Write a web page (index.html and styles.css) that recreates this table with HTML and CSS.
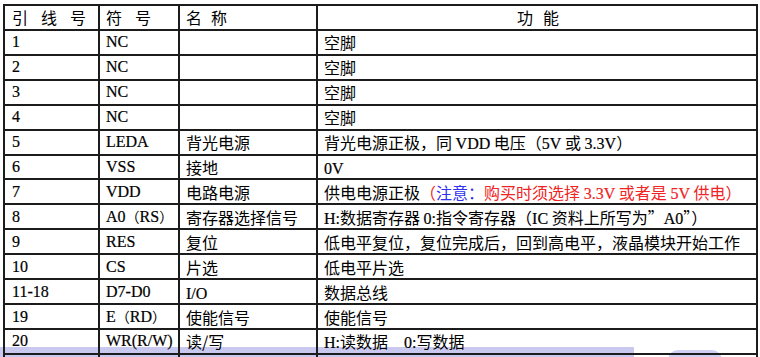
FILE: index.html
```html
<!DOCTYPE html>
<html lang="zh-CN">
<head>
  <meta charset="UTF-8">
  <meta name="viewport" content="width=device-width, initial-scale=1.0">
  <title>引脚功能</title>
  <link rel="stylesheet" href="styles.css">
</head>
<body>
  <div class="sheet">
    <table class="pins">
      <colgroup>
        <col class="c-pin">
        <col class="c-sym">
        <col class="c-name">
        <col class="c-func">
      </colgroup>
      <thead>
        <tr>
          <th class="h-pin">引线号</th>
          <th class="h-sym">符号</th>
          <th class="h-name">名称</th>
          <th class="h-func">功能</th>
        </tr>
      </thead>
      <tbody>
        <tr><td class="pin">1</td><td class="sym">NC</td><td></td><td>空脚</td></tr>
        <tr><td class="pin">2</td><td class="sym">NC</td><td></td><td>空脚</td></tr>
        <tr><td class="pin">3</td><td class="sym">NC</td><td></td><td>空脚</td></tr>
        <tr><td class="pin">4</td><td class="sym">NC</td><td></td><td>空脚</td></tr>
        <tr><td class="pin">5</td><td class="sym">LEDA</td><td>背光电源</td><td>背光电源正极，同 <span class="en">VDD</span> 电压（<span class="en">5V</span> 或 <span class="en">3.3V</span>）</td></tr>
        <tr><td class="pin">6</td><td class="sym">VSS</td><td>接地</td><td><span class="en">0V</span></td></tr>
        <tr><td class="pin">7</td><td class="sym">VDD</td><td>电路电源</td><td>供电电源正极<span class="warn">（</span><span class="note">注意：</span><span class="warn">购买时须选择 <span class="en">3.3V</span> 或者是 <span class="en">5V</span> 供电）</span></td></tr>
        <tr><td class="pin">8</td><td class="sym">A0<span class="cjk">（</span>RS<span class="cjk">）</span></td><td>寄存器选择信号</td><td><span class="en">H:</span>数据寄存器 <span class="en">0:</span>指令寄存器（<span class="en">IC</span> 资料上所写为”<span class="en">A0</span>”）</td></tr>
        <tr><td class="pin">9</td><td class="sym">RES</td><td>复位</td><td>低电平复位，复位完成后，回到高电平，液晶模块开始工作</td></tr>
        <tr><td class="pin">10</td><td class="sym">CS</td><td>片选</td><td>低电平片选</td></tr>
        <tr><td class="pin">11-18</td><td class="sym">D7-D0</td><td><span class="en">I/O</span></td><td>数据总线</td></tr>
        <tr><td class="pin">19</td><td class="sym">E<span class="cjk">（</span>RD<span class="cjk">）</span></td><td>使能信号</td><td>使能信号</td></tr>
        <tr><td class="pin">20</td><td class="sym">WR(R/W)</td><td>读/写</td><td><span class="en">H:</span>读数据　<span class="en">0:</span>写数据</td></tr>
        <tr class="next"><td></td><td></td><td></td><td></td></tr>
      </tbody>
    </table>
    <div class="band"></div>
    <div class="hump"></div>
  </div>
</body>
</html>
```

FILE: styles.css
```css
/* pin table sheet */

html, body {
  margin: 0;
  padding: 0;
  background: #fff;
  overflow: hidden;
}

body {
  font-family: "Noto Sans CJK SC", sans-serif;
  color: #000;
}

.sheet {
  position: relative;
  padding: 4px 0 0 3px;
}

.pins {
  position: relative;
  z-index: 1;
  border-collapse: collapse;
  table-layout: fixed;
  width: 755px;
  background: transparent;
}

.c-pin { width: 95px; }
.c-sym { width: 80px; }
.c-name { width: 138px; }
.c-func { width: 440px; }

.pins th,
.pins td {
  border: 2px solid #1c1c1c;
  height: 22.93px;
  padding: 0 0 0 6px;
  font-size: 16px;
  line-height: 20px;
  text-align: left;
  vertical-align: middle;
  white-space: nowrap;
  overflow: hidden;
}

.pins .pin,
.pins .h-pin {
  padding-left: 7px;
}

.pins th {
  font-weight: normal;
}

.h-pin,
.h-sym { letter-spacing: 13px; }

.h-name { letter-spacing: 9px; }

.pins .h-func {
  text-align: center;
  letter-spacing: 10px;
  padding-left: 12px;
}

.pins .pin,
.pins .sym,
.en {
  font-family: "Liberation Serif", serif;
  font-size: 16px;
  -webkit-text-stroke: 0.2px #000;
}

.en {
  line-height: 1;
}

.warn .en {
  -webkit-text-stroke-color: #f02424;
}

.pins .sym .cjk {
  font-family: "Noto Sans CJK SC", sans-serif;
  font-size: 14px;
  line-height: 1;
  -webkit-text-stroke: 0;
}

.note { color: #3030f0; }
.warn { color: #f02424; }

/* lavender strip that runs under the bottom edge */

.band {
  position: absolute;
  left: 0;
  top: 347px;
  width: 634px;
  height: 12px;
  background: #c9c9ef;
}

.hump {
  position: absolute;
  left: 668px;
  top: 350px;
  width: 54px;
  height: 10px;
  border-radius: 22px 22px 0 0;
  background: #cfcff3;
}
```
